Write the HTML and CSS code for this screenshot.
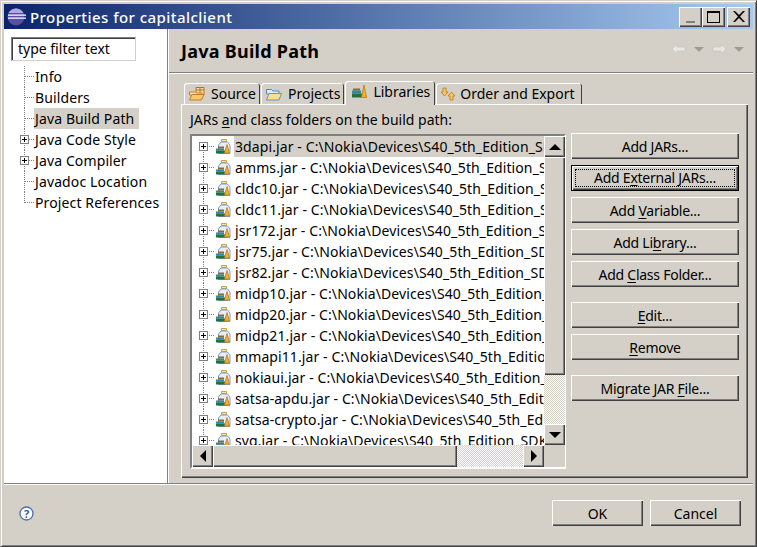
FILE: index.html
```html
<!DOCTYPE html>
<html lang="en">
<head>
    <meta charset="UTF-8">
    <meta name="viewport" content="width=device-width, initial-scale=1.0">
    <title>Properties for capitalclient</title>
    <link rel="stylesheet" href="styles.css">
</head>
<body>
    <svg class="defs" width="0" height="0">
        <symbol id="jar" viewBox="0 0 15 15">
            <path d="M5.500 .5h5v2h-5z" fill="#f8e9a8" stroke="#c9a23c"/>
            <path d="M5 3 2.500 6v8.500h11.500V6L11.500 3z" fill="#e6eefa" stroke="#7f9ccb"/>
            <path d="M2 7.500h6v2H2z" fill="#8a6a30"/>
            <path d="M0 9.500h8v2H0z" fill="#2f86a6"/>
            <path d="M0 11.500h9v3H0z" fill="#22703c"/>
            <path d="M8.500 14 11 5.500 13.500 14z" fill="#f2b02c" stroke="#c47a10" stroke-width=".8"/>
        </symbol>
        <symbol id="books" viewBox="0 0 15 15">
            <path d="M1 4.500h7v2H1z" fill="#8a6a30"/>
            <path d="M0 6.500h9v3H0z" fill="#2f86a6"/>
            <path d="M0 9.500h10v4H0z" fill="#22703c"/>
            <path d="M9.500 13.500 12 1l2.500 12.500z" fill="#f2b02c" stroke="#c47a10" stroke-width=".8"/>
        </symbol>
        <symbol id="source-folder" viewBox="0 0 16 14">
            <path d="M7 .5h8v7H7zM7 3h8M11 .5v7" fill="#f9dca0" stroke="#b9701c"/>
            <path d="M.5 5h6l1 1H13v2H.5z" fill="#fbe7b0" stroke="#c07c28"/>
            <path d="M.5 13 3 7.500h12L12.500 13z" fill="#fbc868" stroke="#c07c28"/>
        </symbol>
        <symbol id="project-folder" viewBox="0 0 16 14">
            <path d="M.5 2.500h5l1.500 1.500h6v3H.5z" fill="#dfe8f6" stroke="#5f86c0"/>
            <path d="M.5 13 3 6.500h12.500L13 13z" fill="#fbe08c" stroke="#6f8fc0"/>
        </symbol>
    </svg>

    <div class="window">
        <div class="titlebar">
            <svg class="app-icon" width="19" height="18" viewBox="0 0 19 18">
                <circle cx="9" cy="9" r="8.500" fill="#5a4fa0"/>
                <path d="M9 .5A8.500 8.500 0 0 0 1.500 5h15A8.500 8.500 0 0 0 9 .5z" fill="#b0a8e0"/>
                <path d="M1 6.500h18v1.300H1zM1 9.500h18v1.300H1z" fill="#fff"/>
            </svg>
            <span class="title-text">Properties for capitalclient</span>
            <div class="caption-buttons">
                <div class="caption-btn"><span class="glyph-min"></span></div>
                <div class="caption-btn"><span class="glyph-max"></span></div>
                <div class="caption-btn close"><svg width="12" height="11" viewBox="0 0 12 11"><path d="M0 0h2l4 4 4-4h2L7 5.500 12 11h-2L6 7l-4 4H0l5-5.500z" fill="#000"/></svg></div>
            </div>
        </div>

        <div class="content">
            <aside class="sidebar">
                <div class="filter">type filter text</div>
                <ul class="tree">
                    <li class="tree-item">Info</li>
                    <li class="tree-item">Builders</li>
                    <li class="tree-item selected"><span>Java Build Path</span></li>
                    <li class="tree-item has-children"><i class="expander"></i>Java Code Style</li>
                    <li class="tree-item has-children"><i class="expander"></i>Java Compiler</li>
                    <li class="tree-item">Javadoc Location</li>
                    <li class="tree-item last">Project References</li>
                </ul>
            </aside>

            <main class="main">
                <header class="page-header">
                    <h1>Java Build Path</h1>
                    <div class="nav-arrows">
                        <svg width="14" height="10" viewBox="0 0 14 10"><path d="M0 5l5-5v3h8v4H5v3z" fill="#e8e6e0" stroke="#c4c0b8" stroke-width=".6"/></svg>
                        <i class="nav-drop"></i>
                        <svg width="14" height="10" viewBox="0 0 14 10"><path d="M14 5L9 0v3H1v4h8v3z" fill="#e8e6e0" stroke="#c4c0b8" stroke-width=".6"/></svg>
                        <i class="nav-drop"></i>
                    </div>
                </header>

                <div class="tabs">
                    <div class="tab"><svg width="16" height="14"><use href="#source-folder"/></svg>Source</div>
                    <div class="tab"><svg width="16" height="14"><use href="#project-folder"/></svg>Projects</div>
                    <div class="tab active"><svg width="15" height="15"><use href="#books"/></svg>Libraries</div>
                    <div class="tab"><svg width="16" height="14" viewBox="0 0 16 14"><path d="M3 1h3v4h2L4.500 9 1 5h2z" fill="#f5c860" stroke="#b9791c" stroke-width=".8"/><path d="M10 13h3V9h2l-3.500-4L8 9h2z" fill="#f5c860" stroke="#b9791c" stroke-width=".8"/></svg>Order and Export</div>
                </div>

                <section class="tab-panel">
                    <p class="list-label">JARs <u>a</u>nd class folders on the build path:</p>
                    <div class="panel-body">
                        <div class="listbox">
                            <div class="rows">
                                <div class="row first"><i class="expander"></i><svg width="15" height="15"><use href="#jar"/></svg><span class="row-text selected">3dapi.jar - C:\Nokia\Devices\S40_5th_Edition_SDK\lib\3dapi.jar</span></div>
                                <div class="row"><i class="expander"></i><svg width="15" height="15"><use href="#jar"/></svg><span class="row-text">amms.jar - C:\Nokia\Devices\S40_5th_Edition_SDK\lib\amms.jar</span></div>
                                <div class="row"><i class="expander"></i><svg width="15" height="15"><use href="#jar"/></svg><span class="row-text">cldc10.jar - C:\Nokia\Devices\S40_5th_Edition_SDK\lib\cldc10.jar</span></div>
                                <div class="row"><i class="expander"></i><svg width="15" height="15"><use href="#jar"/></svg><span class="row-text">cldc11.jar - C:\Nokia\Devices\S40_5th_Edition_SDK\lib\cldc11.jar</span></div>
                                <div class="row"><i class="expander"></i><svg width="15" height="15"><use href="#jar"/></svg><span class="row-text">jsr172.jar - C:\Nokia\Devices\S40_5th_Edition_SDK\lib\jsr172.jar</span></div>
                                <div class="row"><i class="expander"></i><svg width="15" height="15"><use href="#jar"/></svg><span class="row-text">jsr75.jar - C:\Nokia\Devices\S40_5th_Edition_SDK\lib\jsr75.jar</span></div>
                                <div class="row"><i class="expander"></i><svg width="15" height="15"><use href="#jar"/></svg><span class="row-text">jsr82.jar - C:\Nokia\Devices\S40_5th_Edition_SDK\lib\jsr82.jar</span></div>
                                <div class="row"><i class="expander"></i><svg width="15" height="15"><use href="#jar"/></svg><span class="row-text">midp10.jar - C:\Nokia\Devices\S40_5th_Edition_SDK\lib\midp10.jar</span></div>
                                <div class="row"><i class="expander"></i><svg width="15" height="15"><use href="#jar"/></svg><span class="row-text">midp20.jar - C:\Nokia\Devices\S40_5th_Edition_SDK\lib\midp20.jar</span></div>
                                <div class="row"><i class="expander"></i><svg width="15" height="15"><use href="#jar"/></svg><span class="row-text">midp21.jar - C:\Nokia\Devices\S40_5th_Edition_SDK\lib\midp21.jar</span></div>
                                <div class="row"><i class="expander"></i><svg width="15" height="15"><use href="#jar"/></svg><span class="row-text">mmapi11.jar - C:\Nokia\Devices\S40_5th_Edition_SDK\lib\mmapi11.jar</span></div>
                                <div class="row"><i class="expander"></i><svg width="15" height="15"><use href="#jar"/></svg><span class="row-text">nokiaui.jar - C:\Nokia\Devices\S40_5th_Edition_SDK\lib\nokiaui.jar</span></div>
                                <div class="row"><i class="expander"></i><svg width="15" height="15"><use href="#jar"/></svg><span class="row-text">satsa-apdu.jar - C:\Nokia\Devices\S40_5th_Edition_SDK\lib\satsa-apdu.jar</span></div>
                                <div class="row"><i class="expander"></i><svg width="15" height="15"><use href="#jar"/></svg><span class="row-text">satsa-crypto.jar - C:\Nokia\Devices\S40_5th_Edition_SDK\lib\satsa-crypto.jar</span></div>
                                <div class="row"><i class="expander"></i><svg width="15" height="15"><use href="#jar"/></svg><span class="row-text">svg.jar - C:\Nokia\Devices\S40_5th_Edition_SDK\lib\svg.jar</span></div>
                            </div>
                            <div class="vscroll">
                                <div class="sb-btn"><i class="arrow up"></i></div>
                                <div class="sb-thumb v"></div>
                                <div class="sb-track"></div>
                                <div class="sb-btn"><i class="arrow down"></i></div>
                            </div>
                            <div class="hscroll">
                                <div class="sb-btn"><i class="arrow left"></i></div>
                                <div class="sb-thumb h"></div>
                                <div class="sb-track"></div>
                                <div class="sb-btn"><i class="arrow right"></i></div>
                            </div>
                            <div class="corner"></div>
                        </div>

                        <div class="side-buttons">
                            <button class="btn">Add <u>J</u>ARs...</button>
                            <button class="btn default"><span class="focus">Add E<u>x</u>ternal JARs...</span></button>
                            <button class="btn">Add <u>V</u>ariable...</button>
                            <button class="btn">Add Li<u>b</u>rary...</button>
                            <button class="btn">Add <u>C</u>lass Folder...</button>
                            <button class="btn group-start"><u>E</u>dit...</button>
                            <button class="btn"><u>R</u>emove</button>
                            <button class="btn group-start">Migrate JAR <u>F</u>ile...</button>
                        </div>
                    </div>
                </section>
            </main>
        </div>

        <footer class="footer">
            <svg class="help" width="15" height="15" viewBox="0 0 15 15">
                <circle cx="7.500" cy="7.500" r="6.500" fill="#fff" stroke="#4a6ea9" stroke-width="1.300"/>
                <text x="7.500" y="11.500" text-anchor="middle" class="help-mark">?</text>
            </svg>
            <div class="footer-buttons">
                <button class="btn dialog">OK</button>
                <button class="btn dialog">Cancel</button>
            </div>
        </footer>
    </div>
</body>
</html>
```

FILE: styles.css
```css
* {
    box-sizing: border-box;
}

body {
    margin: 0;
    width: 757px;
    height: 547px;
    overflow: hidden;
    font-family: "Noto Sans", "Liberation Sans", sans-serif;
    font-size: 14px;
    color: #000;
    background-color: #d4d0c8;
}

u {
    text-underline-offset: 2px;
}

.defs {
    display: block;
    height: 0;
}

/* window frame */
.window {
    width: 757px;
    height: 547px;
    padding: 3px;
    display: flex;
    flex-direction: column;
    background-color: #d4d0c8;
    border: 1px solid;
    border-color: #d4d0c8 #404040 #404040 #d4d0c8;
    box-shadow: inset 1px 1px 0 #fff, inset -1px -1px 0 #808080;
}

.titlebar {
    height: 25px;
    flex: none;
    display: flex;
    align-items: center;
    padding: 0 3px 0 3px;
    background: linear-gradient(to right, #0a246a, #a6caf0);
}

.app-icon {
    flex: none;
}

.title-text {
    margin-left: 4px;
    color: #fff;
    font-size: 15px;
    font-weight: 500;
    letter-spacing: 0.45px;
}

.caption-buttons {
    margin-left: auto;
    display: flex;
}

.caption-btn {
    width: 23px;
    height: 20px;
    display: flex;
    align-items: center;
    justify-content: center;
    background-color: #d4d0c8;
    box-shadow: inset 1px 1px 0 #fff, inset -1px -1px 0 #404040, inset -2px -2px 0 #808080;
}

.caption-btn.close {
    margin-left: 2px;
}

.glyph-min {
    width: 9px;
    height: 2px;
    margin-top: 11px;
    background-color: #808080;
}

.glyph-max {
    width: 13px;
    height: 12px;
    border: 1px solid #000;
    border-top-width: 2px;
}

/* middle part */
.content {
    height: 455px;
    flex: none;
    display: flex;
    border-bottom: 1px solid #808080;
}

.sidebar {
    width: 164px;
    flex: none;
    background-color: #fff;
    border-right: 1px solid #808080;
    padding: 8px 0 0 7px;
}

.filter {
    width: 125px;
    height: 24px;
    padding-left: 6px;
    line-height: 22px;
    border: 1px solid;
    border-color: #808080 #d4d0c8 #d4d0c8 #808080;
    box-shadow: inset 1px 1px 0 #404040;
}

.tree {
    list-style: none;
    margin: 5px 0 0;
    padding: 0;
    letter-spacing: 0.12px;
}

.tree-item {
    position: relative;
    height: 21px;
    line-height: 21px;
    padding-left: 24px;
    white-space: nowrap;
}

/* dotted tree lines */
.tree-item::before {
    content: "";
    position: absolute;
    left: 13px;
    top: 0;
    height: 21px;
    border-left: 1px dotted #808080;
}

.tree-item::after {
    content: "";
    position: absolute;
    left: 14px;
    top: 10px;
    width: 9px;
    border-top: 1px dotted #808080;
}

.tree-item.last::before {
    height: 11px;
}

.tree-item.selected span {
    display: inline-block;
    height: 21px;
    padding: 0 5px 0 1px;
    margin-left: -1px;
    background-color: #d4d0c8;
}

.expander {
    position: absolute;
    z-index: 1;
    width: 9px;
    height: 9px;
    border: 1px solid #808080;
    background:
        linear-gradient(#000, #000) center / 5px 1px no-repeat,
        linear-gradient(#000, #000) center / 1px 5px no-repeat,
        #fff;
}

.tree-item .expander {
    left: 9px;
    top: 6px;
}

.main {
    flex: 1;
    min-width: 0;
    display: flex;
    flex-direction: column;
    border-left: 1px solid #fff;
}

.page-header {
    height: 44px;
    flex: none;
    display: flex;
    align-items: center;
    justify-content: space-between;
    padding: 0 9px 0 12px;
    border-bottom: 1px solid #808080;
    box-shadow: 0 1px 0 #fff;
}

.page-header h1 {
    margin: 1px 0 0;
    font-size: 18px;
    font-weight: 700;
    letter-spacing: 0.25px;
}

.nav-arrows {
    display: flex;
    align-items: center;
    gap: 8px;
    margin-top: -3px;
}

.nav-drop {
    width: 0;
    height: 0;
    border: 5px solid transparent;
    border-top: 5px solid #a09c94;
    border-bottom: 0;
}

/* tabs */
.tabs {
    height: 31px;
    flex: none;
    display: flex;
    align-items: flex-end;
    padding-left: 15px;
    gap: 1px;
}

.tab {
    height: 21px;
    display: flex;
    align-items: center;
    gap: 6px;
    padding: 0 4px 0 5px;
    white-space: nowrap;
    border-radius: 3px 3px 0 0;
    box-shadow: inset 1px 1px 0 #fff, inset -1px 0 0 #404040;
}

.tab:last-child {
    gap: 4px;
    padding: 0 7px 0 4px;
}

.tab.active {
    height: 24px;
    margin-bottom: -1px;
    position: relative;
    z-index: 1;
    padding: 0 5px 3px 7px;
    background-color: #d4d0c8;
}

.tab-panel {
    margin-left: 12px;
    width: 567px;
    height: 374px;
    padding: 6px 8px 0 9px;
    box-shadow: inset 1px 1px 0 #fff, inset -1px -1px 0 #404040, inset -2px -2px 0 #808080;
}

.list-label {
    margin: 0;
    height: 24px;
    line-height: 20px;
}

.panel-body {
    display: flex;
    gap: 5px;
}

.listbox {
    width: 376px;
    height: 335px;
    flex: none;
    display: grid;
    grid-template-columns: 352px 21px;
    grid-template-rows: 309px 22px;
    border: 2px solid;
    border-color: #808080 #fff #fff #808080;
    box-shadow: inset 1px 1px 0 #404040;
    padding-right: 1px;
}

.rows {
    overflow: hidden;
    background-color: #fff;
    position: relative;
    letter-spacing: 0.1px;
}

.row {
    position: relative;
    height: 21px;
    display: flex;
    align-items: center;
    padding-left: 24px;
    white-space: nowrap;
}

.row::before {
    content: "";
    position: absolute;
    left: 11px;
    top: 0;
    height: 21px;
    border-left: 1px dotted #808080;
}

.row::after {
    content: "";
    position: absolute;
    left: 12px;
    top: 10px;
    width: 10px;
    border-top: 1px dotted #808080;
}

.row.first::before {
    top: 10px;
    height: 11px;
}

.row .expander {
    left: 7px;
    top: 6px;
}

.row svg {
    flex: none;
    position: relative;
    z-index: 1;
}

.row-text {
    margin-left: 3px;
    padding-left: 1px;
    line-height: 21px;
}

.row-text.selected {
    background-color: #d4d0c8;
    flex: 1;
}

/* scrollbars */
.vscroll {
    display: flex;
    flex-direction: column;
}

.hscroll {
    display: flex;
}

.sb-btn {
    flex: none;
    width: 21px;
    height: 21px;
    display: flex;
    align-items: center;
    justify-content: center;
    background-color: #d4d0c8;
    box-shadow: inset 1px 1px 0 #fff, inset -1px -1px 0 #404040, inset -2px -2px 0 #808080;
}

.hscroll .sb-btn {
    height: 22px;
}

.sb-thumb {
    flex: none;
    background-color: #d4d0c8;
    box-shadow: inset 1px 1px 0 #fff, inset -1px -1px 0 #404040, inset -2px -2px 0 #808080;
}

.sb-thumb.v {
    height: 218px;
}

.sb-thumb.h {
    width: 244px;
}

.sb-track {
    flex: 1;
    background: repeating-conic-gradient(#d4d0c8 0 25%, #fff 0 50%) 0 0 / 2px 2px;
}

.corner {
    background-color: #d4d0c8;
}

.arrow {
    width: 0;
    height: 0;
    border: 5px solid transparent;
}

.arrow.up {
    border-width: 0 6px 6px;
    border-bottom-color: #000;
}

.arrow.down {
    border-width: 6px 6px 0;
    border-top-color: #000;
}

.arrow.left {
    border-width: 6px 6px 6px 0;
    border-right-color: #000;
}

.arrow.right {
    border-width: 6px 0 6px 6px;
    border-left-color: #000;
}

/* buttons */
.side-buttons {
    width: 168px;
    flex: none;
    display: flex;
    flex-direction: column;
    gap: 6px;
    margin-top: -1px;
    letter-spacing: -0.25px;
}

.btn {
    height: 26px;
    padding: 0;
    font: inherit;
    letter-spacing: inherit;
    color: #000;
    border: none;
    background-color: #d4d0c8;
    box-shadow: inset 1px 1px 0 #fff, inset -1px -1px 0 #404040, inset -2px -2px 0 #808080;
}

.btn.group-start {
    margin-top: 9px;
}

.btn.default {
    display: flex;
    padding: 4px;
    box-shadow: inset 0 0 0 1px #000, inset 2px 2px 0 #fff, inset -2px -2px 0 #404040, inset -3px -3px 0 #808080;
}

.focus {
    flex: 1;
    line-height: 16px;
    border: 1px dotted #000;
}

/* bottom bar */
.footer {
    flex: 1;
    display: flex;
    align-items: center;
    justify-content: space-between;
    padding: 0 12px 2px 15px;
    border-top: 1px solid #fff;
}

.help-mark {
    font-size: 11px;
    font-weight: 700;
    fill: #3a5a96;
}

.footer-buttons {
    display: flex;
    gap: 7px;
}

.btn.dialog {
    width: 91px;
}
```
